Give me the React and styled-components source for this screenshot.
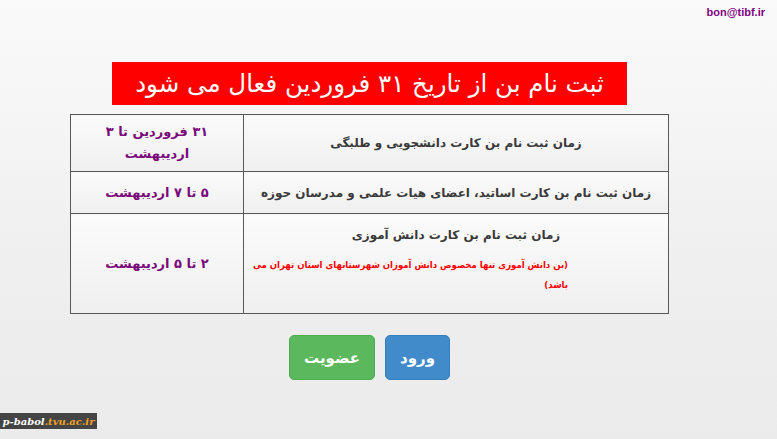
import React from 'react';
import styled, { createGlobalStyle } from 'styled-components';

const GlobalStyle = createGlobalStyle`
  html, body {
    margin: 0;
    padding: 0;
  }
  body {
    background: linear-gradient(to bottom, #fafafa 0%, #efefef 60%, #ebebeb 100%);
    font-family: "DejaVu Sans", sans-serif;
  }
`;

const Page = styled.div`
  position: relative;
  width: 777px;
  height: 439px;
  overflow: hidden;
  direction: rtl;
`;

const TopBar = styled.div`
  display: flex;
  justify-content: flex-start;
  height: 62px;
  padding: 6px 12px 0;
  box-sizing: border-box;
`;

const Email = styled.span`
  direction: ltr;
  color: #800080;
  font-family: "Liberation Sans", Arial, sans-serif;
  font-weight: bold;
  font-size: 11px;
`;

const Main = styled.main`
  width: 599px;
  margin-right: 108px;
`;

const Banner = styled.h1`
  width: 515px;
  height: 43px;
  margin: 0 auto;
  display: flex;
  align-items: center;
  justify-content: center;
  background: #ff0000;
  color: #fff;
  font-size: 24.5px;
  font-weight: normal;
`;

const Table = styled.table`
  width: 100%;
  margin-top: 9px;
  border-collapse: collapse;
  border: 1px solid #585858;
`;

const Cell = styled.td`
  border: 1px solid #585858;
  background: linear-gradient(to bottom, #fbfbfb, #efefef);
  text-align: center;
  vertical-align: middle;
  height: ${(p) => p.$h}px;
  padding: 0 8px;
  font-weight: bold;
  font-size: ${(p) => (p.$date ? '13px' : '12px')};
  color: ${(p) => (p.$date ? '#7a0a7a' : '#3a3a3a')};
  width: ${(p) => (p.$date ? '156px' : 'auto')};
  line-height: ${(p) => (p.$date ? '22px' : '18px')};
`;

const Title = styled.div`
  margin-top: 2px;
`;

const Note = styled.p`
  margin: 11px 0 8px;
  padding: 0 92px 0 0;
  text-align: right;
  color: #ff0000;
  font-family: "DejaVu Sans Condensed", "DejaVu Sans", sans-serif;
  font-size: 9.5px;
  line-height: 20px;
`;

const Actions = styled.div`
  display: flex;
  justify-content: center;
  gap: 10px;
  margin-top: 21px;
`;

const Button = styled.button`
  height: 45px;
  padding: 0 14px;
  border: 1px solid ${(p) => (p.$tone === 'green' ? '#4cae4c' : '#357ebd')};
  border-radius: 5px;
  background: ${(p) => (p.$tone === 'green' ? '#5cb85c' : '#428bca')};
  color: #fff;
  font-family: "DejaVu Sans", sans-serif;
  font-size: 15px;
  font-weight: bold;
  cursor: pointer;
`;

const SiteBadge = styled.div`
  position: absolute;
  left: 0;
  bottom: 10px;
  direction: ltr;
  width: 97px;
  height: 16px;
  display: flex;
  align-items: center;
  justify-content: center;
  background: #444;
  font-family: "DejaVu Serif", serif;
  font-style: italic;
  font-weight: bold;
  font-size: 10px;
  color: #fff;
`;

const Domain = styled.span`
  color: #f0a028;
`;

const rows = [
  {
    h: 56,
    title: 'زمان ثبت نام بن کارت دانشجویی و طلبگی',
    date: (
      <>
        ۳۱ فروردین تا ۳
        <br />
        اردیبهشت
      </>
    ),
  },
  {
    h: 41,
    title: 'زمان ثبت نام بن کارت اساتید، اعضای هیات علمی و مدرسان حوزه',
    date: '۵ تا ۷ اردیبهشت',
  },
  {
    h: 99,
    title: 'زمان ثبت نام بن کارت دانش آموزی',
    note: '(بن دانش آموزی تنها مخصوص دانش آموزان شهرستانهای استان تهران می باشد)',
    date: '۲ تا ۵ اردیبهشت',
  },
];

function App() {
  return (
    <Page>
      <GlobalStyle />
      <TopBar>
        <Email>bon@tibf.ir</Email>
      </TopBar>
      <Main>
        <Banner>ثبت نام بن از تاریخ ۳۱ فروردین فعال می شود</Banner>
        <Table>
          <tbody>
            {rows.map((r, i) => (
              <tr key={i}>
                <Cell $h={r.h}>
                  {r.note ? (
                    <>
                      <Title>{r.title}</Title>
                      <Note>{r.note}</Note>
                    </>
                  ) : (
                    r.title
                  )}
                </Cell>
                <Cell $h={r.h} $date>
                  {r.date}
                </Cell>
              </tr>
            ))}
          </tbody>
        </Table>
        <Actions>
          <Button $tone="blue">ورود</Button>
          <Button $tone="green">عضویت</Button>
        </Actions>
      </Main>
      <SiteBadge>
        p-babol<Domain>.tvu.ac.ir</Domain>
      </SiteBadge>
    </Page>
  );
}

export default App;
